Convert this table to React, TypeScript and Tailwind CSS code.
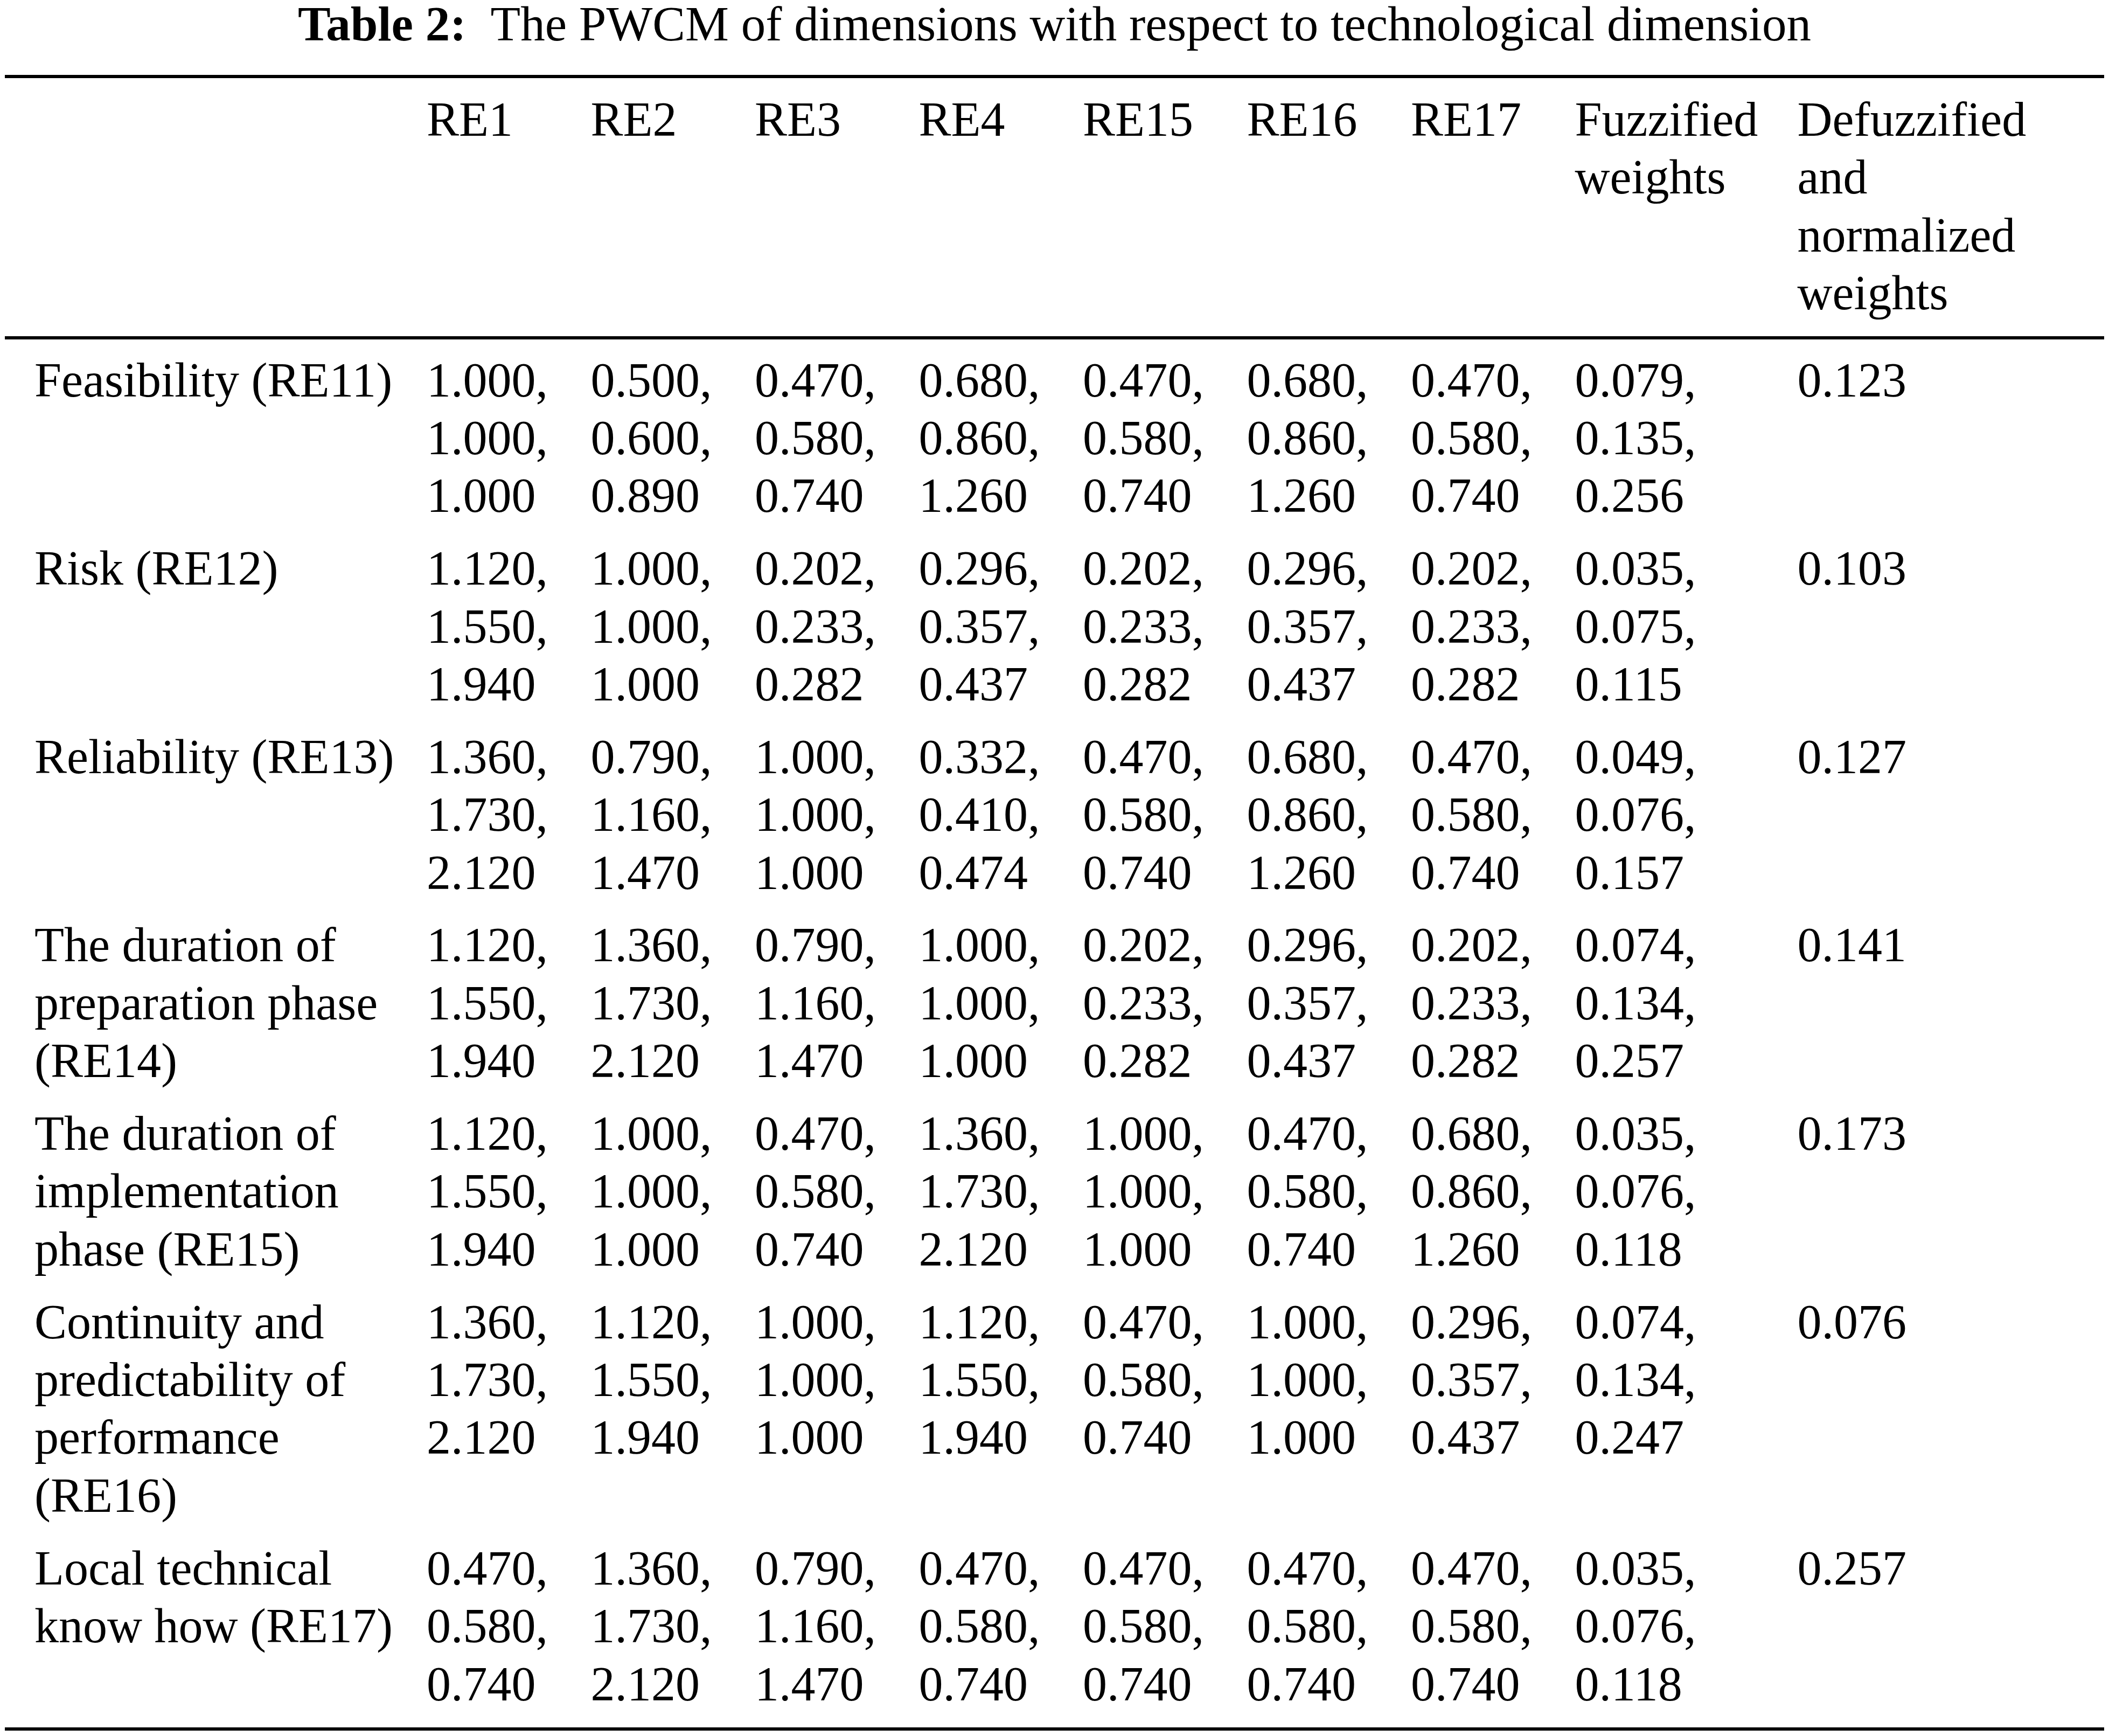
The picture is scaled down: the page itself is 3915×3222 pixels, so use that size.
const rows: { label: string[]; cells: string[][]; weight: string }[] = [
  {
    label: ["Feasibility (RE11)"],
    cells: [
      ["1.000", "1.000", "1.000"],
      ["0.500", "0.600", "0.890"],
      ["0.470", "0.580", "0.740"],
      ["0.680", "0.860", "1.260"],
      ["0.470", "0.580", "0.740"],
      ["0.680", "0.860", "1.260"],
      ["0.470", "0.580", "0.740"],
      ["0.079", "0.135", "0.256"],
    ],
    weight: "0.123",
  },
  {
    label: ["Risk (RE12)"],
    cells: [
      ["1.120", "1.550", "1.940"],
      ["1.000", "1.000", "1.000"],
      ["0.202", "0.233", "0.282"],
      ["0.296", "0.357", "0.437"],
      ["0.202", "0.233", "0.282"],
      ["0.296", "0.357", "0.437"],
      ["0.202", "0.233", "0.282"],
      ["0.035", "0.075", "0.115"],
    ],
    weight: "0.103",
  },
  {
    label: ["Reliability (RE13)"],
    cells: [
      ["1.360", "1.730", "2.120"],
      ["0.790", "1.160", "1.470"],
      ["1.000", "1.000", "1.000"],
      ["0.332", "0.410", "0.474"],
      ["0.470", "0.580", "0.740"],
      ["0.680", "0.860", "1.260"],
      ["0.470", "0.580", "0.740"],
      ["0.049", "0.076", "0.157"],
    ],
    weight: "0.127",
  },
  {
    label: ["The duration of", "preparation phase", "(RE14)"],
    cells: [
      ["1.120", "1.550", "1.940"],
      ["1.360", "1.730", "2.120"],
      ["0.790", "1.160", "1.470"],
      ["1.000", "1.000", "1.000"],
      ["0.202", "0.233", "0.282"],
      ["0.296", "0.357", "0.437"],
      ["0.202", "0.233", "0.282"],
      ["0.074", "0.134", "0.257"],
    ],
    weight: "0.141",
  },
  {
    label: ["The duration of", "implementation", "phase (RE15)"],
    cells: [
      ["1.120", "1.550", "1.940"],
      ["1.000", "1.000", "1.000"],
      ["0.470", "0.580", "0.740"],
      ["1.360", "1.730", "2.120"],
      ["1.000", "1.000", "1.000"],
      ["0.470", "0.580", "0.740"],
      ["0.680", "0.860", "1.260"],
      ["0.035", "0.076", "0.118"],
    ],
    weight: "0.173",
  },
  {
    label: ["Continuity and", "predictability of", "performance", "(RE16)"],
    cells: [
      ["1.360", "1.730", "2.120"],
      ["1.120", "1.550", "1.940"],
      ["1.000", "1.000", "1.000"],
      ["1.120", "1.550", "1.940"],
      ["0.470", "0.580", "0.740"],
      ["1.000", "1.000", "1.000"],
      ["0.296", "0.357", "0.437"],
      ["0.074", "0.134", "0.247"],
    ],
    weight: "0.076",
  },
  {
    label: ["Local technical", "know how (RE17)"],
    cells: [
      ["0.470", "0.580", "0.740"],
      ["1.360", "1.730", "2.120"],
      ["0.790", "1.160", "1.470"],
      ["0.470", "0.580", "0.740"],
      ["0.470", "0.580", "0.740"],
      ["0.470", "0.580", "0.740"],
      ["0.470", "0.580", "0.740"],
      ["0.035", "0.076", "0.118"],
    ],
    weight: "0.257",
  },
];

const headers = ["RE1", "RE2", "RE3", "RE4", "RE15", "RE16", "RE17"];

const cols = "grid grid-cols-[728px_repeat(7,304.5px)_413px_1fr] pl-[55px]";

function Lines({ lines }: { lines: string[] }) {
  return (
    <div>
      {lines.map((l, i) => (
        <div key={i} className="whitespace-nowrap">
          {l}
        </div>
      ))}
    </div>
  );
}

export default function App() {
  return (
    <div
      className="w-[3915px] h-[3222px] bg-white text-black px-[9px] text-[90px] leading-[107.4px]"
      style={{ fontFamily: '"Liberation Serif", "Times New Roman", serif' }}
    >
      {/* Caption */}
      <div className="text-center text-[91px] leading-[90px] whitespace-nowrap">
        <span className="font-bold">Table 2:</span>
        <span className="ml-[45px]">The PWCM of dimensions with respect to technological dimension</span>
      </div>

      <div className="mt-[49px] h-[6px] bg-black" />

      {/* Header */}
      <div className={`${cols} pt-[23px] pb-[26px]`}>
        <div />
        {headers.map((h) => (
          <div key={h}>{h}</div>
        ))}
        <Lines lines={["Fuzzified", "weights"]} />
        <Lines lines={["Defuzzified", "and", "normalized", "weights"]} />
      </div>

      <div className="h-[6px] bg-black" />

      {/* Body */}
      <div className="flex flex-col gap-y-[27.4px] pt-[22px] pb-[27px]">
        {rows.map((r, ri) => (
          <div key={ri} className={cols}>
            <Lines lines={r.label} />
            {r.cells.map((c, ci) => (
              <Lines key={ci} lines={[c[0] + ",", c[1] + ",", c[2]]} />
            ))}
            <div>{r.weight}</div>
          </div>
        ))}
      </div>

      <div className="h-[6px] bg-black" />
    </div>
  );
}
